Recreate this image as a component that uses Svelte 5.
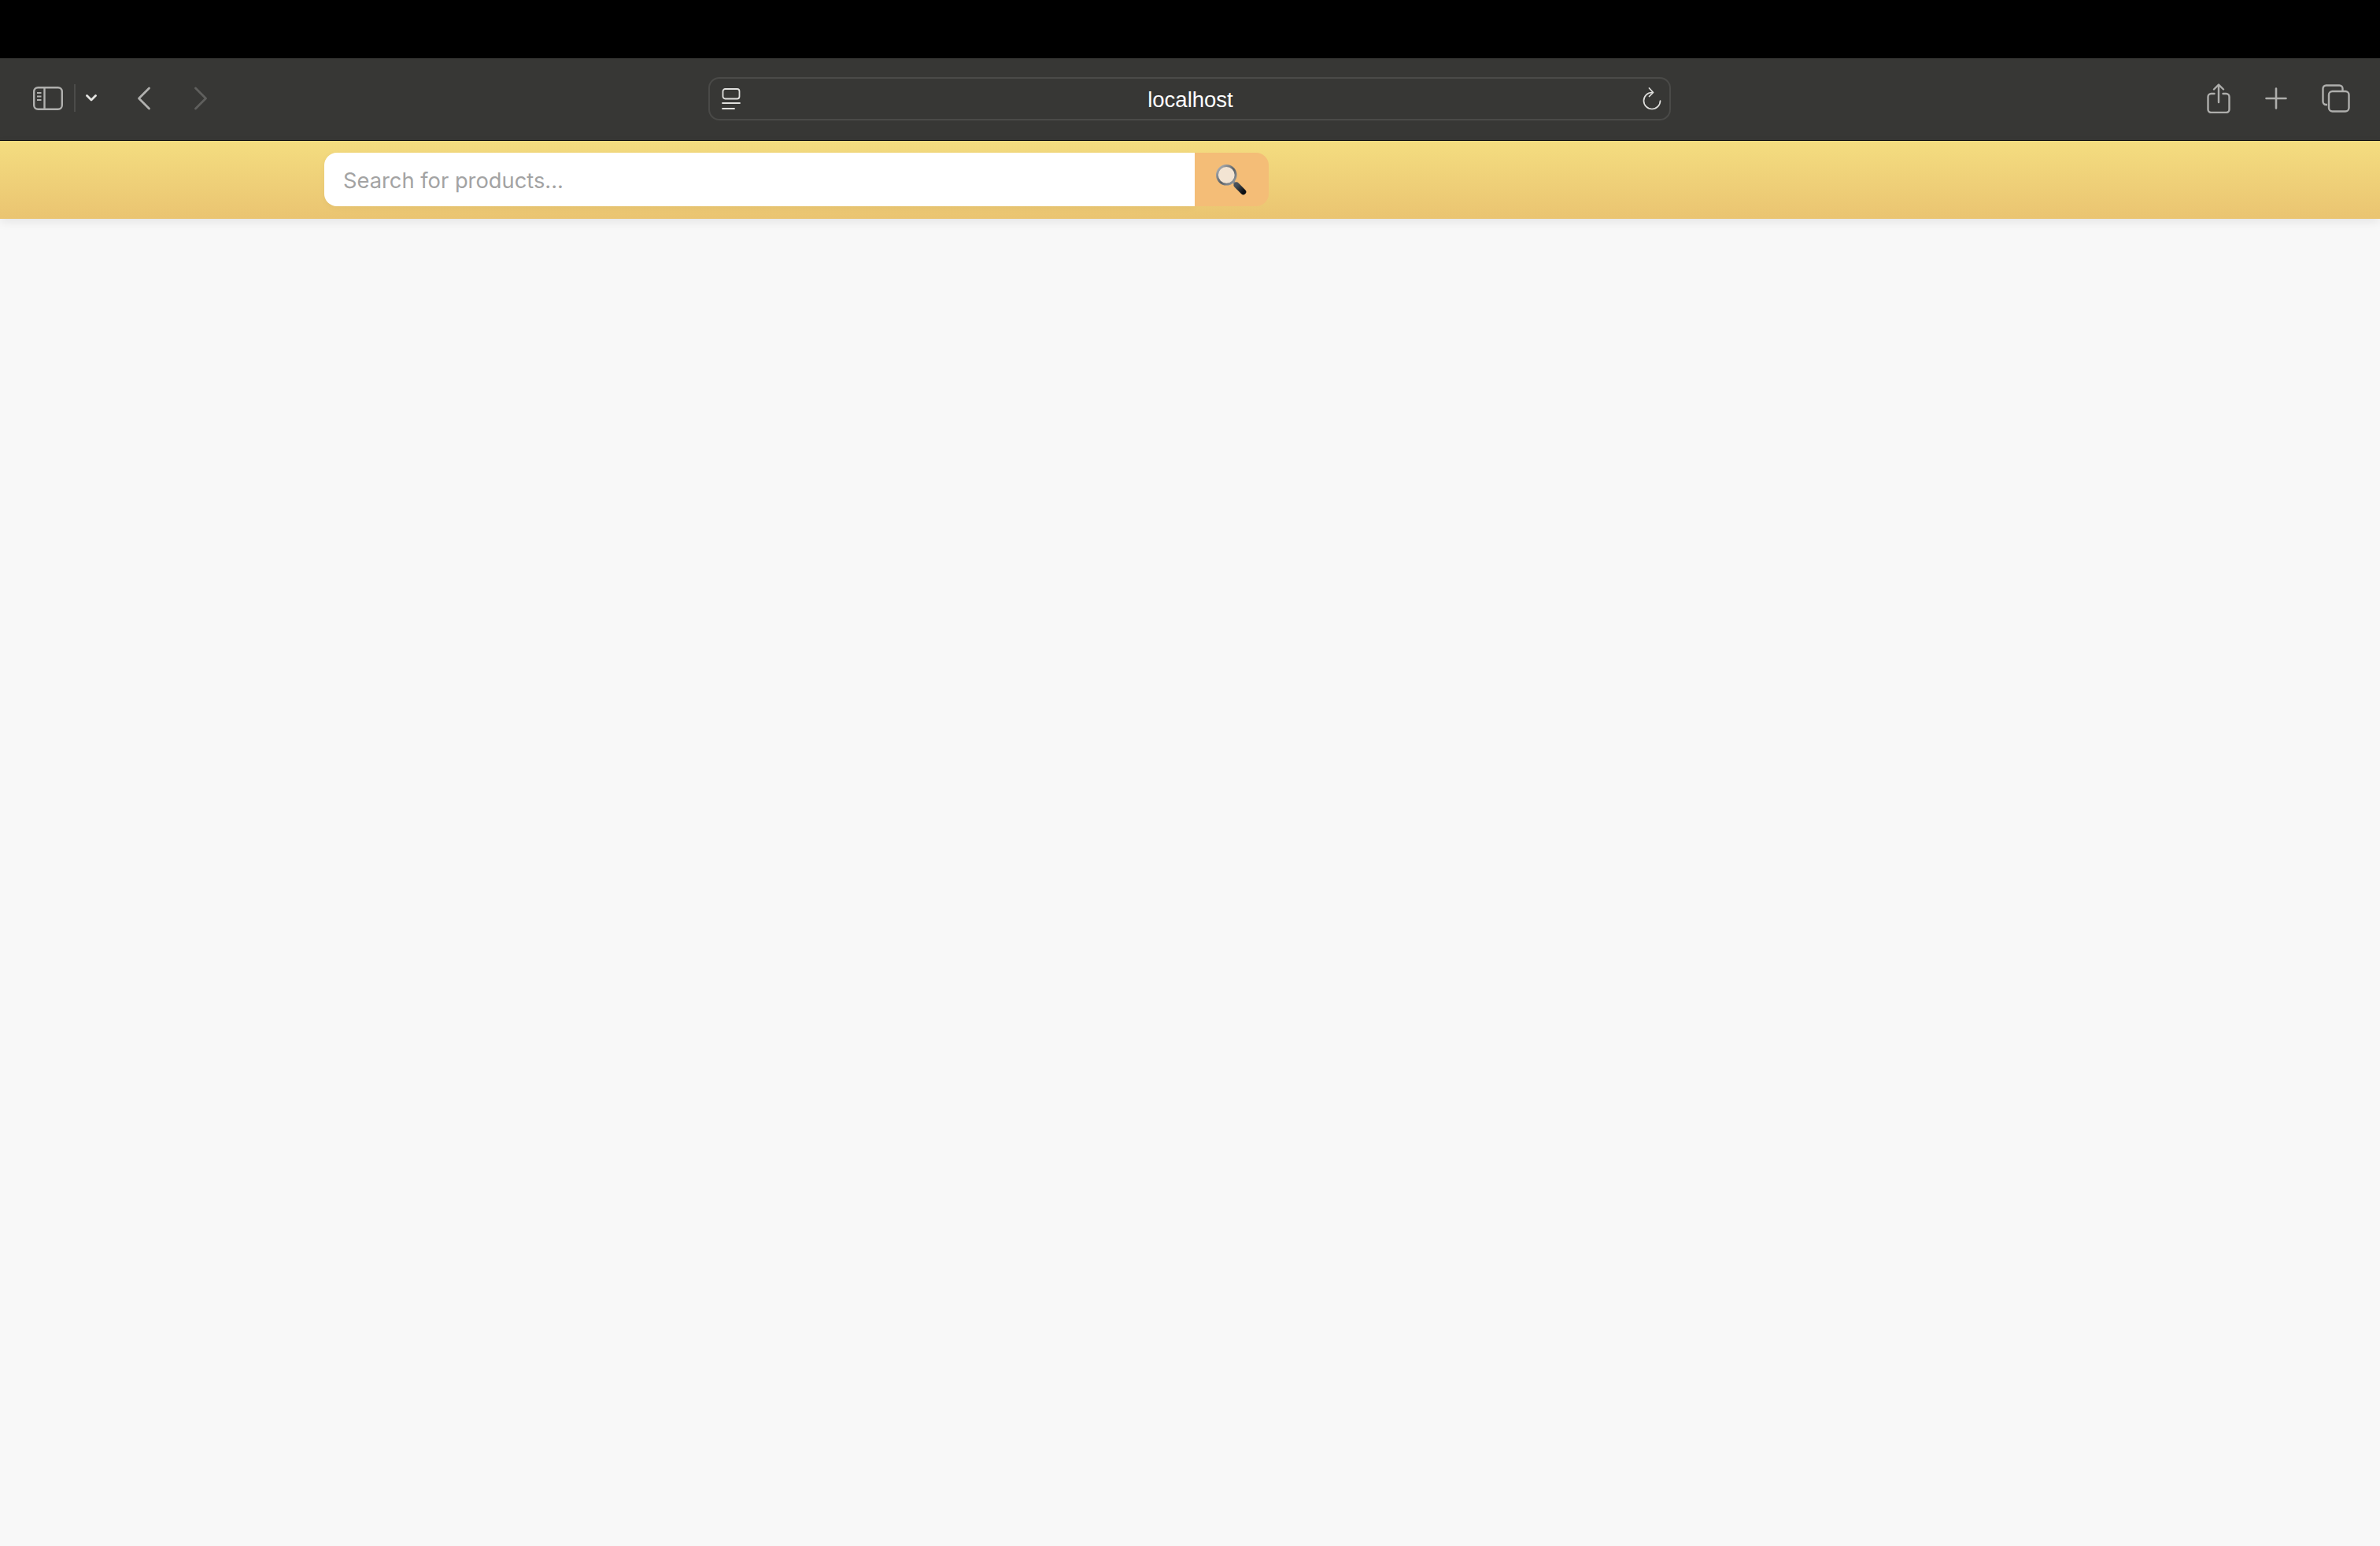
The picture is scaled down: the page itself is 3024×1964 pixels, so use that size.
<script>
  let query = '';
</script>

<div class="page">
  <div class="menubar"></div>

  <div class="toolbar">
    <div class="tools left">
      <svg class="sidebar" width="38" height="30" viewBox="0 0 38 30" fill="none" stroke="#b0b0ae" stroke-width="2.4">
        <rect x="1.2" y="1.2" width="35.6" height="27.6" rx="5" />
        <path d="M14.5 1.2v27.6" />
        <path d="M5 8h5.5M5 12.5h5.5M5 17h5.5" stroke-width="2" />
      </svg>
      <span class="divider"></span>
      <svg class="chevron" width="14" height="9" viewBox="0 0 14 9" fill="none" stroke="#e4e4e2" stroke-width="2.8" stroke-linecap="round" stroke-linejoin="round">
        <path d="M1.5 1.5 7 7l5.5-5.5" />
      </svg>
      <svg class="back" width="18" height="30" viewBox="0 0 18 30" fill="none" stroke="#b0b0ae" stroke-width="2.8" stroke-linecap="round" stroke-linejoin="round">
        <path d="M15.5 2 2.5 15l13 13" />
      </svg>
      <svg class="forward" width="18" height="30" viewBox="0 0 18 30" fill="none" stroke="#5f5f5d" stroke-width="2.8" stroke-linecap="round" stroke-linejoin="round">
        <path d="M2.5 2l13 13-13 13" />
      </svg>
    </div>

    <div class="address">
      <svg class="site" width="24" height="28" viewBox="0 0 24 28" fill="none" stroke="#e0e0de" stroke-width="1.8" stroke-linecap="round">
        <rect x="1.5" y="1" width="21" height="12.5" rx="3" />
        <path d="M1 19h22" />
        <path d="M1 26h15" />
      </svg>
      <span class="host">localhost</span>
      <svg class="reload" width="26" height="30" viewBox="0 0 26 30" fill="none" stroke="#e0e0de" stroke-width="1.7" stroke-linecap="round" stroke-linejoin="round">
        <path d="M13 6.5A10.5 10.5 0 1 0 23.5 17" />
        <path d="M9.5 1 14.5 6.5 9.5 11.5" />
      </svg>
    </div>

    <div class="tools right">
      <svg width="30" height="38" viewBox="0 0 30 38" fill="none" stroke="#aeaeac" stroke-width="2.4" stroke-linecap="round" stroke-linejoin="round">
        <path d="M9.5 13H5.5a4 4 0 0 0-4 4v16a4 4 0 0 0 4 4h19a4 4 0 0 0 4-4V17a4 4 0 0 0-4-4h-4" />
        <path d="M15 24V2M9 7.5 15 1.5l6 6" />
      </svg>
      <svg width="28" height="28" viewBox="0 0 28 28" fill="none" stroke="#aeaeac" stroke-width="2.6" stroke-linecap="round">
        <path d="M14 1.5v25M1.5 14h25" />
      </svg>
      <svg width="36" height="36" viewBox="0 0 36 36" fill="none" stroke="#aeaeac" stroke-width="2.4">
        <path d="M7 26H5.5a4 4 0 0 1-4-4V5.5a4 4 0 0 1 4-4h17a4 4 0 0 1 4 4V8" />
        <rect x="9" y="9" width="25.5" height="25.5" rx="4.5" />
      </svg>
    </div>
  </div>

  <header class="header">
    <form class="search" on:submit|preventDefault>
      <input type="text" placeholder="Search for products..." bind:value={query} />
      <button type="submit" aria-label="Search">
        <svg width="40" height="40" viewBox="0 0 42 42">
          <defs>
            <linearGradient id="rim" x1="0" y1="0" x2="1" y2="1">
              <stop offset="0" stop-color="#b9bcbf" />
              <stop offset="0.55" stop-color="#5a6066" />
              <stop offset="1" stop-color="#a3a7aa" />
            </linearGradient>
            <linearGradient id="grip" x1="0" y1="0" x2="1" y2="1">
              <stop offset="0" stop-color="#4a525a" />
              <stop offset="1" stop-color="#0c0f13" />
            </linearGradient>
          </defs>
          <path d="M24 24l4 4" stroke="#7d8287" stroke-width="3.5" />
          <path d="M28.5 28.5l9 9" stroke="url(#grip)" stroke-width="7.5" stroke-linecap="round" />
          <circle cx="15" cy="15" r="12.4" fill="#f3e4d3" stroke="url(#rim)" stroke-width="3" />
        </svg>
      </button>
    </form>
  </header>

  <main class="content"></main>
</div>

<style>
  :global(body) {
    margin: 0;
    background: #f8f8f8;
  }

  .page {
    display: flex;
    flex-direction: column;
    min-height: 1964px;
    background: #f8f8f8;
    font-family: "Liberation Sans", Arial, sans-serif;
  }

  .menubar {
    height: 74px;
    background: #000;
  }

  .toolbar {
    display: grid;
    grid-template-columns: 900px 1223px 1fr;
    align-items: center;
    height: 103px;
    padding-bottom: 1px;
    background: #373735;
    border-bottom: 1px solid #111;
    box-sizing: content-box;
  }

  .tools {
    display: flex;
    align-items: center;
    margin-bottom: 2px;
  }

  .left {
    padding-left: 42px;
  }

  .divider {
    width: 2px;
    height: 35px;
    margin-left: 14px;
    background: #4c4c4a;
  }

  .chevron {
    margin-left: 13px;
  }

  .back {
    margin-left: 51px;
  }

  .forward {
    margin-left: 54px;
  }

  .right {
    padding-left: 681px;
    gap: 44px;
  }

  .address {
    position: relative;
    display: flex;
    align-items: center;
    justify-content: space-between;
    height: 55px;
    padding: 0 9px 0 15px;
    border: 2px solid #4a4a48;
    border-radius: 14px;
    box-sizing: border-box;
  }

  .host {
    position: absolute;
    left: 2px;
    right: 0;
    top: 11px;
    text-align: center;
    color: #fff;
    font-size: 27.5px;
  }

  .header {
    height: 99px;
    padding: 15px 0 0 412px;
    box-sizing: border-box;
    background: linear-gradient(180deg, #f4dd80 0%, #eac471 100%);
    box-shadow: 0 4px 12px rgba(0, 0, 0, 0.08);
  }

  .search {
    display: flex;
    width: 1200px;
    height: 68px;
  }

  input {
    flex: 1;
    min-width: 0;
    padding: 2px 24px 0;
    border: none;
    border-radius: 16px 0 0 16px;
    background: #fff;
    font-family: Inter, "Liberation Sans", sans-serif;
    font-size: 27.3px;
    outline: none;
    box-shadow: 0 2px 8px rgba(0, 0, 0, 0.04);
  }

  input::placeholder {
    color: #a3a3a3;
    opacity: 1;
  }

  button {
    display: flex;
    align-items: center;
    justify-content: center;
    width: 94px;
    padding: 0 2px 0 0;
    border: none;
    border-radius: 0 16px 16px 0;
    background: #f4bd77;
  }

  .content {
    flex: 1;
  }
</style>
